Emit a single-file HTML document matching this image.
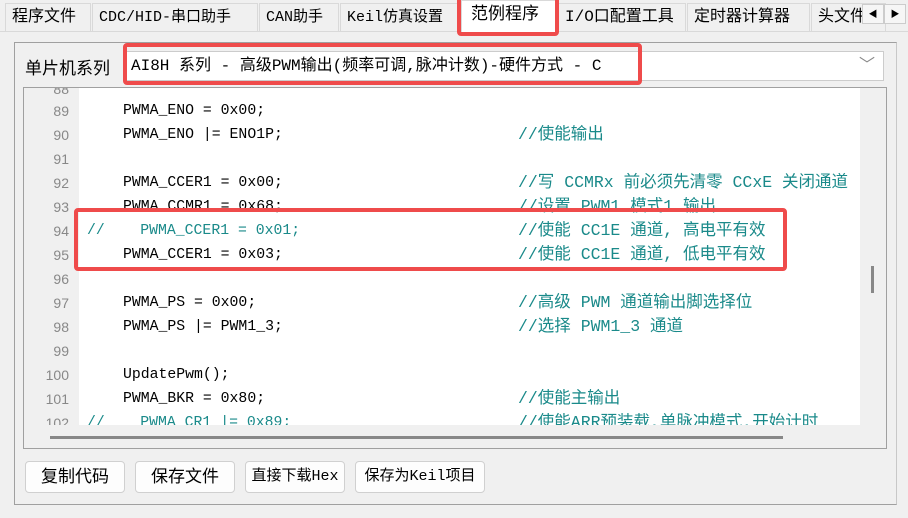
<!DOCTYPE html>
<html><head><meta charset="utf-8"><style>
*{margin:0;padding:0;box-sizing:border-box}
body{width:908px;height:518px;background:#f0f0f0;position:relative;overflow:hidden;font-family:"Liberation Sans","Noto Sans CJK SC",sans-serif;font-size:15px;color:#000}
.a{position:absolute}
.tab{position:absolute;top:3px;height:28px;border:1px solid #d9d9d9;border-bottom:none;background:#f0f0f0;font-size:16px;line-height:27px;padding-left:6px;white-space:nowrap;font-family:"Liberation Mono","Noto Sans CJK SC",monospace}
.mono{font-family:"Liberation Mono","Noto Sans CJK SC",monospace}
.ln{position:absolute;left:23px;width:46px;text-align:right;color:#888;font-size:14px;font-family:"Liberation Sans",sans-serif}
.code{position:absolute;left:123px;font-size:14.8px;white-space:pre;font-family:"Liberation Mono","Noto Sans CJK SC",monospace}
.cm{position:absolute;left:518px;font-size:16.5px;color:#1a8a8a;white-space:pre;font-family:"Liberation Mono","Noto Sans CJK SC",monospace;margin-top:-5px}
.btn{position:absolute;top:461px;height:32px;border:1px solid #d0d0d0;border-radius:4px;background:#fdfdfd;text-align:center;line-height:30px;font-size:17px;white-space:nowrap}
.red{position:absolute;border:4px solid #ef4b4b;border-radius:4px}
</style></head><body>
<div class="a" style="left:0;top:31px;width:908px;height:1px;background:#d9d9d9"></div>
<div class="tab" style="left:5px;width:86px">程序文件</div>
<div class="tab" style="left:92px;width:166px;font-size:15px">CDC/HID-串口助手</div>
<div class="tab" style="left:259px;width:80px;font-size:15px">CAN助手</div>
<div class="tab" style="left:340px;width:118px;font-size:15px">Keil仿真设置</div>
<div class="tab" style="left:461px;top:0;height:32px;width:96px;background:#fff;font-size:17px;line-height:30px;padding-left:9px">范例程序</div>
<div class="tab" style="left:558px;width:128px">I/O口配置工具</div>
<div class="tab" style="left:687px;width:123px">定时器计算器</div>
<div class="tab" style="left:811px;width:75px">头文件</div>
<div class="a" style="left:862px;top:4px;width:22px;height:20px;border:1px solid #ccc;background:#f6f6f6;font-size:9px;text-align:center;line-height:18px">◀</div>
<div class="a" style="left:884px;top:4px;width:22px;height:20px;border:1px solid #ccc;background:#f6f6f6;font-size:9px;text-align:center;line-height:18px">▶</div>
<div class="red" style="left:457px;top:-4px;width:102px;height:40px"></div>

<div class="a" style="left:14px;top:42px;width:883px;height:463px;border:1px solid #a0a0a0;border-right-color:#c8c8c8;border-bottom-color:#a0a0a0"></div>
<div class="a" style="left:25px;top:54px;font-size:17px">单片机系列</div>
<div class="a mono" style="left:124px;top:51px;width:760px;height:30px;border:1px solid #ccc;background:#fff;font-size:16px;line-height:28px;padding-left:6px;white-space:nowrap">AI8H 系列 - 高级PWM输出(频率可调,脉冲计数)-硬件方式 - C<span style="position:absolute;right:8px;color:#888">﹀</span></div>
<div class="red" style="left:123px;top:43px;width:519px;height:42px"></div>

<div class="a" style="left:23px;top:87px;width:864px;height:362px;border:1px solid #a0a0a0;background:#f0f0f0"></div>
<div class="a" style="left:79px;top:88px;width:781px;height:337px;background:#fff"></div>
<div class="a" style="left:50px;top:436px;width:733px;height:3px;background:#888"></div>
<div class="a" style="left:871px;top:266px;width:3px;height:27px;background:#888"></div>

<div class="a" style="left:23px;top:88px;width:837px;height:337px;overflow:hidden">
<div style="position:relative;left:-23px;top:-86px">
<div class="ln" style="top:79px">88</div>
<div class="ln" style="top:101px">89</div><div class="code" style="top:101px">PWMA_ENO = 0x00;</div>
<div class="ln" style="top:125px">90</div><div class="code" style="top:125px">PWMA_ENO |= ENO1P;</div><div class="cm" style="top:123px">//使能输出</div>
<div class="ln" style="top:149px">91</div>
<div class="ln" style="top:173px">92</div><div class="code" style="top:173px">PWMA_CCER1 = 0x00;</div><div class="cm" style="top:171px">//写 CCMRx 前必须先清零 CCxE 关闭通道</div>
<div class="ln" style="top:197px">93</div><div class="code" style="top:197px">PWMA_CCMR1 = 0x68;</div><div class="cm" style="top:195px">//设置 PWM1 模式1 输出</div>
<div class="ln" style="top:221px">94</div><div class="code" style="top:221px;left:87px;color:#1a8a8a">//    PWMA_CCER1 = 0x01;</div><div class="cm" style="top:219px">//使能 CC1E 通道, 高电平有效</div>
<div class="ln" style="top:245px">95</div><div class="code" style="top:245px">PWMA_CCER1 = 0x03;</div><div class="cm" style="top:243px">//使能 CC1E 通道, 低电平有效</div>
<div class="ln" style="top:269px">96</div>
<div class="ln" style="top:293px">97</div><div class="code" style="top:293px">PWMA_PS = 0x00;</div><div class="cm" style="top:291px">//高级 PWM 通道输出脚选择位</div>
<div class="ln" style="top:317px">98</div><div class="code" style="top:317px">PWMA_PS |= PWM1_3;</div><div class="cm" style="top:315px">//选择 PWM1_3 通道</div>
<div class="ln" style="top:341px">99</div>
<div class="ln" style="top:365px">100</div><div class="code" style="top:365px">UpdatePwm();</div>
<div class="ln" style="top:389px">101</div><div class="code" style="top:389px">PWMA_BKR = 0x80;</div><div class="cm" style="top:387px">//使能主输出</div>
<div class="ln" style="top:413px">102</div><div class="code" style="top:413px;left:87px;color:#1a8a8a">//    PWMA_CR1 |= 0x89;</div><div class="cm" style="top:411px">//使能ARR预装载,单脉冲模式,开始计时</div>
</div></div>
<div class="a" style="left:23px;top:88px;width:56px;height:337px;background:#f0f0f0;z-index:-1"></div>
<div class="red" style="left:74px;top:208px;width:713px;height:63px"></div>

<div class="btn" style="left:25px;width:100px">复制代码</div>
<div class="btn" style="left:135px;width:100px">保存文件</div>
<div class="btn mono" style="left:245px;width:100px;font-size:15px">直接下载Hex</div>
<div class="btn mono" style="left:355px;width:130px;font-size:15px">保存为Keil项目</div>
</body></html>
